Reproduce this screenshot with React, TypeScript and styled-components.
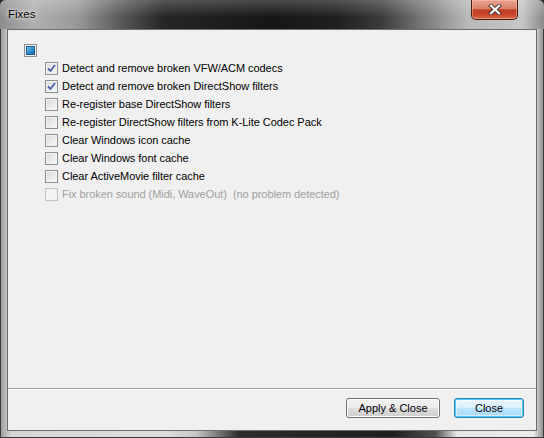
import * as React from 'react'
import styled, { createGlobalStyle, css } from 'styled-components'

const GlobalStyle = createGlobalStyle`
  html, body {
    margin: 0;
    padding: 0;
    background: #2a2a2a;
    overflow: hidden;
  }
  body {
    font-family: "Liberation Sans", Arial, sans-serif;
    font-size: 11px;
  }
`

type CheckState = 'checked' | 'unchecked' | 'mixed'

type Fix = {
  label: string
  state: CheckState
  disabled?: boolean
}

const fixes: Fix[] = [
  { label: 'Detect and remove broken VFW/ACM codecs', state: 'checked' },
  { label: 'Detect and remove broken DirectShow filters', state: 'checked' },
  { label: 'Re-register base DirectShow filters', state: 'unchecked' },
  { label: 'Re-register DirectShow filters from K-Lite Codec Pack', state: 'unchecked' },
  { label: 'Clear Windows icon cache', state: 'unchecked' },
  { label: 'Clear Windows font cache', state: 'unchecked' },
  { label: 'Clear ActiveMovie filter cache', state: 'unchecked' },
  {
    label: 'Fix broken sound (Midi, WaveOut)  (no problem detected)',
    state: 'unchecked',
    disabled: true,
  },
]

const Window = styled.div`
  width: 544px;
  height: 438px;
  box-sizing: border-box;
  display: flex;
  flex-direction: column;
  border-radius: 6px 6px 0 0;
  overflow: hidden;
  background: linear-gradient(
    to right,
    #9a9a9a 0%,
    #d6d6d6 2%,
    #dedede 30%,
    #c8c8c8 36%,
    #2c2c2c 44%,
    #1e1e1e 72%,
    #505050 80%,
    #e6e6e6 84%,
    #ececec 98%,
    #8a8a8a 100%
  );
  box-shadow: inset 0 0 0 1px #3a3a3a;
`

const TitleBar = styled.div`
  height: 29px;
  flex: none;
  display: flex;
  align-items: flex-start;
  justify-content: space-between;
  background:
    linear-gradient(to bottom, rgba(255, 255, 255, 0.22), rgba(255, 255, 255, 0) 60%),
    linear-gradient(
      to right,
      #8c8c8c 0%,
      #b0b0b0 6%,
      #9a9a9a 14%,
      #5a5a5a 22%,
      #262626 30%,
      #161616 50%,
      #202020 62%,
      #3a3a3a 70%,
      #7a7a7a 78%,
      #b8b8b8 86%,
      #c6c6c6 96%,
      #8a8a8a 100%
    );
`

const Title = styled.span`
  margin: 8px 0 0 8px;
  font-family: "Liberation Sans", Arial, sans-serif;
  font-size: 11.5px;
  color: #000;
  text-shadow: 0 0 6px rgba(255, 255, 255, 0.9), 0 0 3px rgba(255, 255, 255, 0.7);
`

const CloseBox = styled.div`
  width: 47px;
  height: 20px;
  margin-right: 26px;
  box-sizing: border-box;
  display: flex;
  align-items: center;
  justify-content: center;
  border: 1px solid #4a1e16;
  border-top: none;
  border-radius: 0 0 5px 5px;
  background:
    linear-gradient(
      to bottom,
      #e8a491 0%,
      #d9806a 45%,
      #c33e25 52%,
      #c9432a 75%,
      #d86a4c 100%
    );
  box-shadow: inset 0 0 0 1px rgba(255, 200, 180, 0.45);
`

const Client = styled.div`
  flex: 1;
  margin: 0 7px 7px 7px;
  display: flex;
  flex-direction: column;
  background: #f0f0f0;
  border: 1px solid #6e6e6e;
`

const Content = styled.div`
  flex: 1;
  padding: 11px 16px 0 16px;
  display: flex;
  flex-direction: column;
`

const Row = styled.label<{ $indent?: boolean; $disabled?: boolean }>`
  height: 18px;
  display: flex;
  align-items: center;
  gap: 4px;
  padding-left: ${(p) => (p.$indent ? '21px' : '0')};
  color: ${(p) => (p.$disabled ? '#a0a0a0' : '#000')};
  letter-spacing: -0.05px;
  white-space: pre;
`

const Box = styled.span<{ $disabled?: boolean }>`
  width: 13px;
  height: 13px;
  flex: none;
  box-sizing: border-box;
  border: 1px solid ${(p) => (p.$disabled ? '#c4c4c4' : '#8e8f8f')};
  background: ${(p) =>
    p.$disabled
      ? '#f4f4f4'
      : 'linear-gradient(135deg, #d4d6d9 0%, #e8e9ea 50%, #f8f8f8 100%)'};
  box-shadow: inset 0 0 0 1px ${(p) => (p.$disabled ? '#f0f0f0' : '#f4f4f4')};
  display: flex;
  align-items: center;
  justify-content: center;
`

const Mixed = styled.span`
  width: 7px;
  height: 7px;
  border: 1px solid #1d5a8c;
  background: linear-gradient(135deg, #7cc4ec 0%, #2b8fcf 55%, #1a70b0 100%);
`

const Separator = styled.div`
  height: 1px;
  background: #a0a0a0;
  border-bottom: 1px solid #ffffff;
`

const Footer = styled.div`
  height: 40px;
  box-sizing: border-box;
  display: flex;
  justify-content: flex-end;
  align-items: flex-start;
  gap: 14px;
  padding: 8px 12px 0 0;
`

const Button = styled.button<{ $default?: boolean; $width: number }>`
  width: ${(p) => p.$width}px;
  height: 20px;
  padding: 0;
  font-family: "Liberation Sans", Arial, sans-serif;
  font-size: 11px;
  color: #000;
  border-radius: 3px;
  border: 1px solid #707070;
  background: linear-gradient(to bottom, #f2f2f2 0%, #ebebeb 50%, #dddddd 51%, #cfcfcf 100%);
  box-shadow: inset 0 0 0 1px #fcfcfc;
  ${(p) =>
    p.$default &&
    css`
      border-color: #3c7fb1;
      background: linear-gradient(to bottom, #eaf6fd 0%, #d9f0fc 50%, #bee6fd 51%, #a7d9f5 100%);
      box-shadow: inset 0 0 0 1px #48d0f8, inset 0 0 0 2px rgba(255, 255, 255, 0.5);
    `}
`

const CheckMark = () => (
  <svg width="9" height="9" viewBox="0 0 9 9">
    <path d="M1 4.5 L3.5 7 L8 1" fill="none" stroke="#4a62a6" strokeWidth="1.8" />
  </svg>
)

const Checkbox: React.FC<{ state: CheckState; disabled?: boolean }> = ({ state, disabled }) => (
  <Box $disabled={disabled}>
    {state === 'checked' && <CheckMark />}
    {state === 'mixed' && <Mixed />}
  </Box>
)

const CloseGlyph = () => (
  <svg width="14" height="11" viewBox="0 0 14 11">
    <path d="M3 1.8 L11 9.2 M11 1.8 L3 9.2" stroke="#4a3430" strokeWidth="4" strokeLinecap="square" />
    <path d="M3 1.8 L11 9.2 M11 1.8 L3 9.2" stroke="#ffffff" strokeWidth="2.2" strokeLinecap="square" />
  </svg>
)

const App: React.FC = () => {
  return (
    <React.Fragment>
      <GlobalStyle />
      <Window>
        <TitleBar>
          <Title>Fixes</Title>
          <CloseBox>
            <CloseGlyph />
          </CloseBox>
        </TitleBar>
        <Client>
          <Content>
            <Row>
              <Checkbox state="mixed" />
            </Row>
            {fixes.map((fix, i) => (
              <Row $indent $disabled={fix.disabled} key={i}>
                <Checkbox state={fix.state} disabled={fix.disabled} />
                {fix.label}
              </Row>
            ))}
          </Content>
          <Separator />
          <Footer>
            <Button $width={94}>Apply &amp; Close</Button>
            <Button $width={70} $default>
              Close
            </Button>
          </Footer>
        </Client>
      </Window>
    </React.Fragment>
  )
}

export default App
